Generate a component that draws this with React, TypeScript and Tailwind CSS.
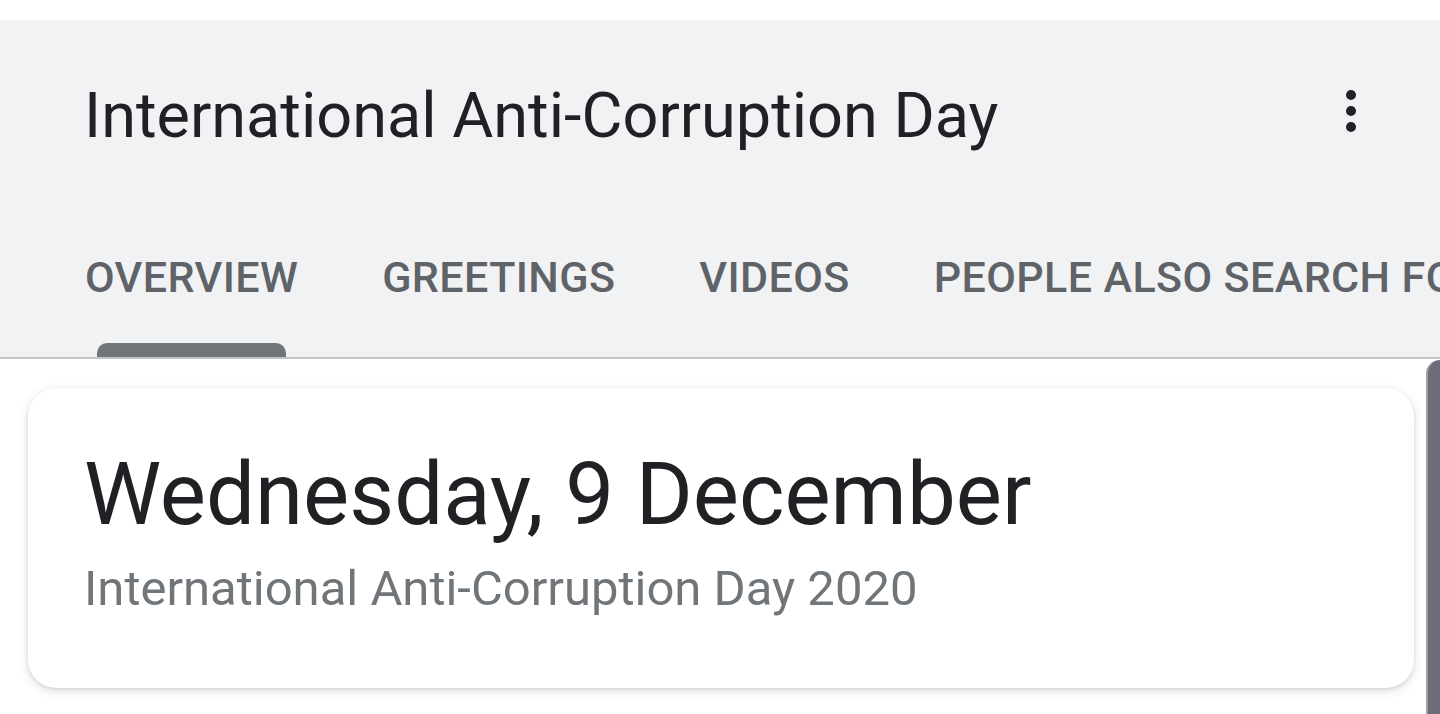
export default function App() {
  const tabs = ['OVERVIEW', 'GREETINGS', 'VIDEOS', 'PEOPLE ALSO SEARCH FOR'];

  return (
    <div className="relative h-[714px] w-[1440px] overflow-hidden bg-white font-['Roboto',sans-serif]">
      {/* top strip */}
      <div className="h-[20px] bg-white shadow-[0_1px_2px_rgba(0,0,0,0.03)]" />

      {/* header */}
      <div className="h-[339px] bg-[#f1f2f3] border-b-2 border-[#c4c5c6] flex flex-col">
        <div className="flex items-start justify-between pl-[84px] pr-[84px] pt-[60px]">
          <h1 className="text-[63px] leading-[72px] text-[#202124] whitespace-nowrap">
            International Anti-Corruption Day
          </h1>
          <div className="flex flex-col gap-[6px] pt-[10px]">
            <span className="block h-[10px] w-[10px] rounded-full bg-[#202124]" />
            <span className="block h-[10px] w-[10px] rounded-full bg-[#202124]" />
            <span className="block h-[10px] w-[10px] rounded-full bg-[#202124]" />
          </div>
        </div>

        <div className="mt-auto flex gap-[84px] pl-[85px] whitespace-nowrap">
          {tabs.map((t, i) => (
            <div key={t} className="flex flex-col">
              <span className="text-[43px] leading-[48px] font-medium tracking-[0.4px] text-[#5f6368]">
                {t}
              </span>
              <div className="mt-[42px] flex justify-center px-[12px]">
                <div
                  className={
                    i === 0
                      ? 'h-[14px] w-full rounded-t-[10px] bg-[#70757a]'
                      : 'h-[14px] w-full'
                  }
                />
              </div>
            </div>
          ))}
        </div>
      </div>

      {/* card */}
      <div className="flex pt-[29px] pl-[28px] pr-[26px]">
        <div className="flex-1 h-[300px] rounded-[28px] bg-white shadow-[0_3px_10px_rgba(60,64,67,0.18),0_1px_3px_rgba(60,64,67,0.12)] pl-[56px] pt-[56px]">
          <div className="text-[87px] leading-[100px] text-[#202124] whitespace-nowrap">
            Wednesday, 9 December
          </div>
          <div className="mt-[17px] text-[49px] leading-[56px] text-[#70757a] whitespace-nowrap">
            International Anti-Corruption Day 2020
          </div>
        </div>
      </div>

      {/* side card peek */}
      <div className="absolute right-0 top-[360px] h-[360px] w-[14px] rounded-tl-[14px] bg-[#6e6b7b] border-l-2 border-[#a09ca8]" />
    </div>
  );
}
